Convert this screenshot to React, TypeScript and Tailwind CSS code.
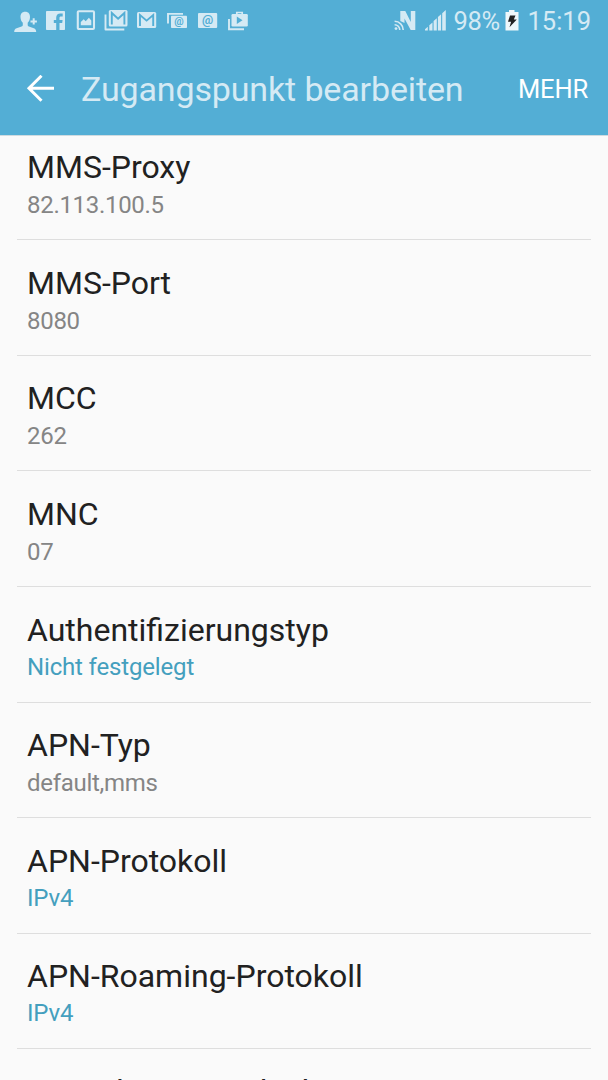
import type { ReactNode } from 'react'

interface Setting {
  title: string
  value: string
  isChoice?: boolean
}

const settings: Setting[] = [
  { title: 'MMS-Proxy', value: '82.113.100.5' },
  { title: 'MMS-Port', value: '8080' },
  { title: 'MCC', value: '262' },
  { title: 'MNC', value: '07' },
  { title: 'Authentifizierungstyp', value: 'Nicht festgelegt', isChoice: true },
  { title: 'APN-Typ', value: 'default,mms' },
  { title: 'APN-Protokoll', value: 'IPv4', isChoice: true },
  { title: 'APN-Roaming-Protokoll', value: 'IPv4', isChoice: true },
  { title: 'APN aktivieren/deaktivieren', value: '' },
]

function StatusIcon({ children }: { children: ReactNode }) {
  return (
    <svg className="w-6 h-6 shrink-0" viewBox="0 0 24 24" fill="currentColor" aria-hidden="true">
      {children}
    </svg>
  )
}

function NotificationIcons() {
  return (
    <div className="flex gap-1.5 pt-[9px]">
      {/* Contact */}
      <StatusIcon>
        <path d="M11.200 2.800C8 2.800 6.300 5 6.500 8.200c.1 2.300 1 4.300 2.300 5.500v2.200c0 .7-.5 1.200-1.200 1.500L2.600 19.200c-1.800.7-2.400 1.800-2.400 3.800h22c0-2-.6-3.100-2.400-3.800l-4.900-1.800c-.7-.3-1.200-.8-1.200-1.500v-2.200c1.300-1.200 2.200-3.200 2.300-5.500C16.100 5 14.400 2.800 11.200 2.800z" />
        <path d="M19.700 9.200v6.400M16.500 12.400h6.400" stroke="currentColor" strokeWidth="2" />
      </StatusIcon>
      {/* Facebook */}
      <StatusIcon>
        <rect x="2" y="2" width="19" height="19" rx="0.8" />
        <path d="M12.200 21v-7h-2.400v-3h2.400V8.800c0-3 1.600-4.400 4.100-4.400h2.400v3h-1.700c-1.100 0-1.500.5-1.500 1.500V11h3.100l-.4 3h-2.700v7z" fill="#53aed5" />
      </StatusIcon>
      {/* Screenshot */}
      <StatusIcon>
        <rect x="3.800" y="2.200" width="16.200" height="17.800" rx="1" fill="none" stroke="currentColor" strokeWidth="2.100" />
        <path d="M6.800 16.300v-3.300l2.900-2.700 2 2 3.200-3.500 2.400 2.800v4.700z" />
      </StatusIcon>
      {/* Mail stack */}
      <StatusIcon>
        <path d="M1.500 5.500v15h18.800" fill="none" stroke="currentColor" strokeWidth="1.900" strokeLinejoin="round" />
        <rect x="4.800" y="1" width="18.700" height="16.500" rx="1.500" />
        <path d="M7.800 15.500V4l6.300 5.800L20.400 4v11.500" fill="none" stroke="#53aed5" strokeWidth="1.900" />
      </StatusIcon>
      {/* Mail */}
      <StatusIcon>
        <rect x="3" y="3" width="19.200" height="16" rx="1.500" />
        <path d="M6 17V6l6.600 5.600L19.200 6v11" fill="none" stroke="#53aed5" strokeWidth="1.900" />
      </StatusIcon>
      {/* E-mail accounts */}
      <StatusIcon>
        <path d="M19 4.900H4v9.600" fill="none" stroke="currentColor" strokeWidth="1.900" />
        <rect x="7" y="6.700" width="16" height="12.300" rx="0.8" />
        <text x="15" y="15.600" textAnchor="middle" className="font-[Roboto] text-[10.500px] font-bold" fill="#53aed5">@</text>
      </StatusIcon>
      {/* E-mail */}
      <StatusIcon>
        <rect x="4" y="4" width="19.200" height="15" rx="1" />
        <text x="13.500" y="14.600" textAnchor="middle" className="font-[Roboto] text-[12.500px] font-bold" fill="#53aed5">@</text>
      </StatusIcon>
      {/* Play Store updates */}
      <StatusIcon>
        <path d="M5 10v10.300h15" fill="none" stroke="currentColor" strokeWidth="1.900" />
        <path d="M12.800 6V3.500h5.400V6" fill="none" stroke="currentColor" strokeWidth="1.700" />
        <rect x="7.500" y="5" width="16.300" height="12.500" rx="1.200" />
        <path d="M12.800 7.600v7.300l5.700-3.700z" fill="#53aed5" />
      </StatusIcon>
    </div>
  )
}

function StatusBar() {
  return (
    <div className="flex justify-between h-11 pl-3.5 pr-[17px] text-[#d5eaf4]">
      <NotificationIcons />
      <div className="flex pt-[9px]">
        {/* NFC */}
        <svg className="w-6 h-6 mr-[7px]" viewBox="0 0 24 24" fill="currentColor" aria-hidden="true">
          <path d="M7.300 12V2h5l5.500 11V2h4.500v19h-4.600L11.500 9.500V14z" />
          <circle cx="3" cy="19.600" r="1.400" />
          <path d="M1.600 15.700a5.300 5.300 0 0 1 5.200 5.300M1.600 12.300a8.700 8.700 0 0 1 8.600 8.700" fill="none" stroke="currentColor" strokeWidth="1.600" />
        </svg>
        {/* Signal */}
        <svg className="w-6 h-6 mr-[5px]" viewBox="0 0 24 24" fill="currentColor" aria-hidden="true">
          <path d="M1 21.500v-1.200l2.800-2.600v3.800zM5.300 21.500v-5.300l3.200-2.800v8.100zM9.600 21.500V12l3.200-2.800v12.300zM13.900 21.500V8l3.200-2.800v16.300zM18.200 21.500V4.300L21.800 1v20.500z" />
        </svg>
        <span className="text-[25.500px] leading-[25px] tracking-[-0.300px] w-[50px] whitespace-nowrap">98%</span>
        {/* Charging battery */}
        <svg className="w-4 h-6 ml-px mr-[7px]" viewBox="0 0 16 24" fill="currentColor" aria-hidden="true">
          <path d="M5 1h5.500v2h4v18.500h-13V3H5z" fill="#eef7fa" />
          <path d="M6 6.500h5.500L9.800 10.500h3L5.500 18.300l1.600-5.500H4z" fill="#222" />
        </svg>
        <span className="text-[25.500px] leading-[25px] whitespace-nowrap">15:19</span>
      </div>
    </div>
  )
}

function ActionBar() {
  return (
    <div className="flex items-center h-[91px] pl-[26px] pr-5 pb-[2px]">
      <button className="text-white" aria-label="Zurück">
        <svg className="w-7 h-7" viewBox="0 0 28 28" fill="none" stroke="currentColor" strokeWidth="3" aria-hidden="true">
          <path d="M28 13.300H3M15.500 0.800L3 13.300 15.500 25.800" />
        </svg>
      </button>
      <h1 className="ml-[27px] text-[34px] leading-10 tracking-[-0.140px] whitespace-nowrap text-[#d5eaf4]">Zugangspunkt bearbeiten</h1>
      <button className="ml-auto text-[25.500px] leading-8 tracking-[-0.150px] text-white">MEHR</button>
    </div>
  )
}

function SettingRow({ title, value, isChoice }: Setting) {
  return (
    <li className="flex flex-col shrink-0 h-[115.630px] pt-[22.600px] last:pt-[21.600px] pl-2.5 border-b border-[#dedede]">
      <p className="text-[32px] leading-10 whitespace-nowrap text-[#212121]">{title}</p>
      <p className={isChoice ? 'text-2xl leading-[35.500px] tracking-[-0.160px] text-[#449fbe]' : 'text-2xl leading-9 tracking-[-0.300px] text-[#858585]'}>{value}</p>
    </li>
  )
}

export default function App() {
  return (
    <div className="flex flex-col w-[608px] h-[1080px] overflow-hidden bg-[#fafafa] font-[Roboto,sans-serif]">
      <header className="shrink-0 bg-[#53aed5] border-b border-[#cfdbe0]">
        <StatusBar />
        <ActionBar />
      </header>
      {/* List is scrolled a little, so the first row starts under the header */}
      <main className="flex-1 min-h-0 overflow-hidden">
        <ul className="flex flex-col -mt-[11.600px] ml-[17px] mr-[17px]">
          {settings.map((setting) => (
            <SettingRow key={setting.title} {...setting} />
          ))}
        </ul>
      </main>
    </div>
  )
}
